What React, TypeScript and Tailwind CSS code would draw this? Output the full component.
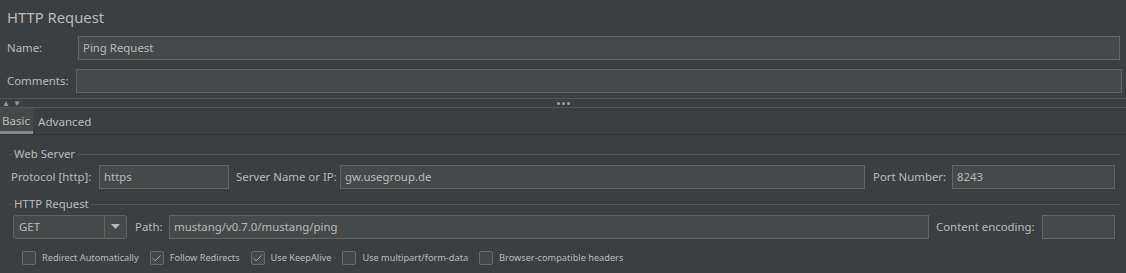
import { Check } from "lucide-react";

const field = "h-[24px] bg-[#45494a] border border-[#646464] px-[4px] flex items-center text-[#bbbbbb] whitespace-nowrap";

function Legend({ title, gap }: { title: string; gap: string }) {
  return (
    <div className={`flex items-center h-[14px] pl-[9px] pr-[6px] ${gap}`}>
      <div className="w-[3px] h-px bg-[#555555]" />
      <span className="px-[2px] text-[11.4px] leading-none">{title}</span>
      <div className="flex-1 h-px bg-[#555555]" />
    </div>
  );
}

function CheckBox({ label, checked, className }: { label: string; checked?: boolean; className?: string }) {
  return (
    <div className={`flex items-center ${className ?? ""}`}>
      <div className="w-[14px] h-[14px] rounded-[2px] border border-[#6b6b6b] bg-[#43494a] flex items-center justify-center">
        {checked && <Check size={11} strokeWidth={2} className="text-[#a9b7c6]" />}
      </div>
      <span className="ml-[6px] text-[9.2px] whitespace-nowrap">{label}</span>
    </div>
  );
}

export default function App() {
  return (
    <div
      className="w-[1126px] h-[273px] bg-[#3c3f41] text-[#bbbbbb] overflow-hidden"
      style={{ fontFamily: '"Noto Sans", "Open Sans", sans-serif' }}
    >
      {/* Title */}
      <div className="h-[36px] pl-[7px] pt-[6px] text-[14.8px] leading-[22px]">HTTP Request</div>

      {/* Name / Comments */}
      <div className="flex items-center h-[24px] text-[11.4px]">
        <span className="w-[78px] pl-[7px]">Name:</span>
        <div className={`${field} flex-1 mr-[6px]`}>Ping Request</div>
      </div>
      <div className="flex items-center h-[24px] mt-[9px] text-[11.4px]">
        <span className="w-[76px] pl-[7px]">Comments:</span>
        <div className={`${field} flex-1 mr-[4px]`} />
      </div>

      {/* Splitter */}
      <div className="mt-[5px] h-[10px] border-t border-b border-[#555555] relative flex items-center justify-center">
        <div className="absolute left-[2px] top-[0px] flex gap-[3px] text-[8px] leading-none text-[#9a9a9a]">
          <span>▲</span>
          <span>▼</span>
        </div>
        <div className="flex gap-[2px]">
          <div className="w-[3px] h-[3px] rounded-full bg-[#a0a0a0]" />
          <div className="w-[3px] h-[3px] rounded-full bg-[#a0a0a0]" />
          <div className="w-[3px] h-[3px] rounded-full bg-[#a0a0a0]" />
        </div>
      </div>

      {/* Tabs */}
      <div className="flex h-[27px] border-b border-[#323232] text-[11.6px]">
        <div className="w-[33px] bg-[#45494a] border-b-[3px] border-[#8a8a8a] flex items-center pl-[2px] pt-[2px]">Basic</div>
        <div className="flex items-center pl-[5px] pt-[1px]">Advanced</div>
      </div>

      {/* Web Server */}
      <Legend title="Web Server" gap="mt-[12px]" />
      <div className="flex items-center h-[24px] mt-[4px] text-[11.4px] whitespace-nowrap">
        <span className="pl-[11px] w-[99px]">Protocol [http]:</span>
        <div className={`${field} w-[130px]`}>https</div>
        <span className="ml-[7px] w-[104px]">Server Name or IP:</span>
        <div className={`${field} w-[525px]`}>gw.usegroup.de</div>
        <span className="ml-[8px] w-[79px]">Port Number:</span>
        <div className={`${field} w-[163px]`}>8243</div>
      </div>

      {/* HTTP Request */}
      <Legend title="HTTP Request" gap="mt-[8px]" />
      <div className="flex items-center h-[24px] mt-[4px] text-[11.4px] whitespace-nowrap">
        <div className="ml-[13px] w-[114px] h-[24px] rounded-[3px] border border-[#646464] bg-[#45494a] flex">
          <span className="flex-1 flex items-center pl-[5px]">GET</span>
          <div className="w-[22px] border-l border-[#646464] flex items-center justify-center">
            <svg width="9" height="6" viewBox="0 0 9 6">
              <path d="M0 0 L9 0 L4.5 5 Z" fill="#bbbbbb" />
            </svg>
          </div>
        </div>
        <span className="ml-[8px] w-[34px]">Path:</span>
        <div className={`${field} w-[760px]`}>mustang/v0.7.0/mustang/ping</div>
        <span className="ml-[7px] w-[106px]">Content encoding:</span>
        <div className={`${field} w-[73px]`} />
      </div>

      {/* Options */}
      <div className="flex items-center h-[14px] mt-[12px]">
        <CheckBox label="Redirect Automatically" className="ml-[22px]" />
        <CheckBox label="Follow Redirects" checked className="ml-[11px]" />
        <CheckBox label="Use KeepAlive" checked className="ml-[11px]" />
        <CheckBox label="Use multipart/form-data" className="ml-[11px]" />
        <CheckBox label="Browser-compatible headers" className="ml-[11px]" />
      </div>
    </div>
  );
}
